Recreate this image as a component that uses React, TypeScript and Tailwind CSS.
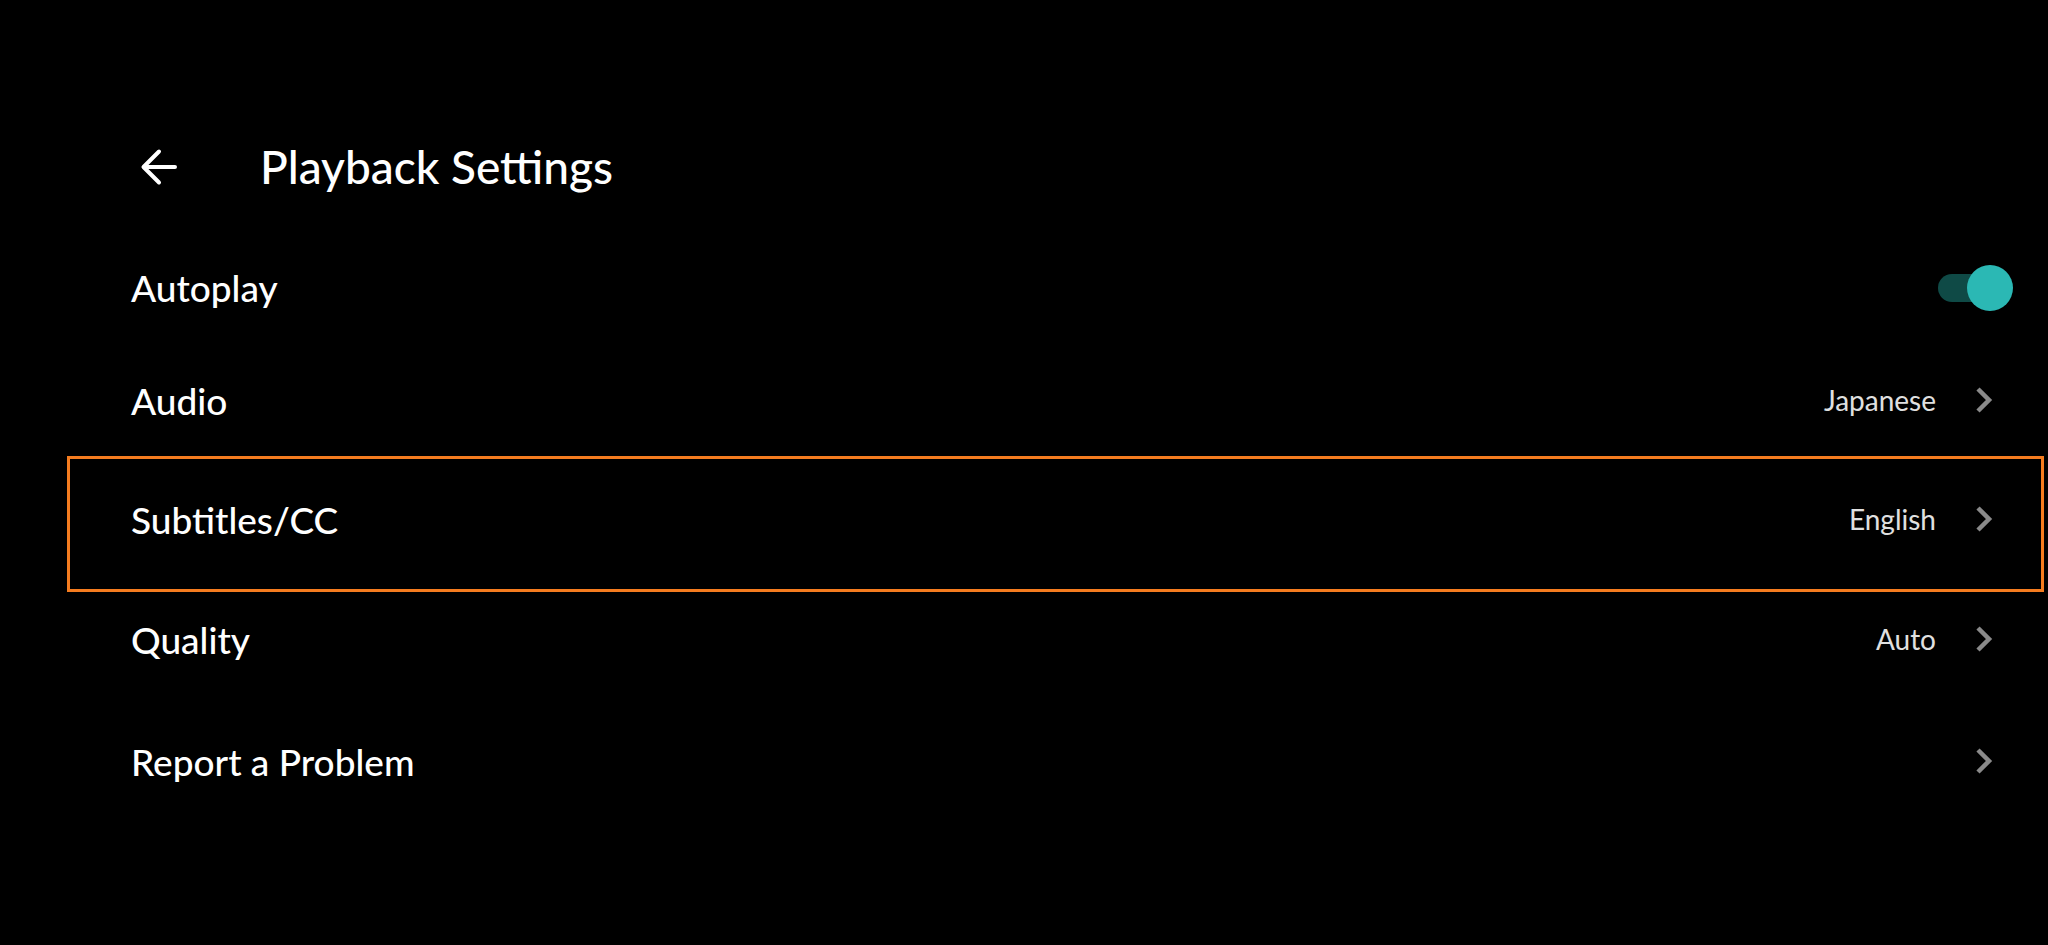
import React from "react";

const Chevron = () => (
  <svg width="18" height="26" viewBox="0 0 18 26" className="shrink-0 overflow-visible">
    <path d="M3 2 L14 13 L3 24" fill="none" stroke="#8a8a8a" strokeWidth="4.5" strokeLinejoin="miter" />
  </svg>
);

const BackArrow = () => (
  <svg width="36" height="36" viewBox="0 0 36 36" className="overflow-visible">
    <path
      d="M34 18 H3 M18 2.5 L2.5 18 L18 33.5"
      fill="none"
      stroke="#ffffff"
      strokeWidth="4"
      strokeLinecap="round"
      strokeLinejoin="round"
    />
  </svg>
);

const Toggle = () => (
  <div className="relative w-[75px] h-[46px] -mr-[20px] flex items-center">
    <div className="w-[64px] h-[28px] rounded-full bg-[#0f4a46]" />
    <div className="absolute right-0 top-0 w-[46px] h-[46px] rounded-full bg-[#2bb8b4]" />
  </div>
);

export default function App() {
  const font = { fontFamily: "Lato, 'Open Sans', sans-serif" };
  return (
    <div className="w-[2048px] h-[945px] bg-black text-white overflow-hidden" style={font}>
      <div className="pt-[120px]">
        <div className="h-[94px] flex items-center">
          <div className="ml-[141px] w-[36px] h-[36px] flex items-center">
            <BackArrow />
          </div>
          <div className="ml-[83px] text-[46px] leading-none font-medium">
            Playback Settings
          </div>
        </div>
        <div className="mt-[17px] pl-[67px] pr-[4px] flex flex-col">
          <div className="h-[113px] border-[3px] border-transparent flex items-center pl-[61px] pr-[48px]">
            <span className="text-[37px] font-medium leading-none flex-1">Autoplay</span>
            <Toggle />
          </div>
          <div className="h-[112px] border-[3px] border-transparent flex items-center pl-[61px] pr-[48px]">
            <span className="text-[37px] font-medium leading-none flex-1">Audio</span>
            <span className="text-[28px] leading-none text-[#e0e0e0] mr-[39px]">Japanese</span>
            <Chevron />
          </div>
          <div className="h-[136px] border-[3px] border-[#f57c1f] flex items-center pl-[61px] pr-[48px] pb-[10px]">
            <span className="text-[37px] font-medium leading-none flex-1">Subtitles/CC</span>
            <span className="text-[28px] leading-none text-[#e0e0e0] mr-[39px]">English</span>
            <Chevron />
          </div>
          <div className="h-[94px] border-[3px] border-transparent flex items-center pl-[61px] pr-[48px]">
            <span className="text-[37px] font-medium leading-none flex-1">Quality</span>
            <span className="text-[28px] leading-none text-[#e0e0e0] mr-[39px]">Auto</span>
            <Chevron />
          </div>
          <div className="h-[150px] border-[3px] border-transparent flex items-center pl-[61px] pr-[48px]">
            <span className="text-[37px] font-medium leading-none flex-1">Report a Problem</span>
            <Chevron />
          </div>
        </div>
      </div>
    </div>
  );
}
